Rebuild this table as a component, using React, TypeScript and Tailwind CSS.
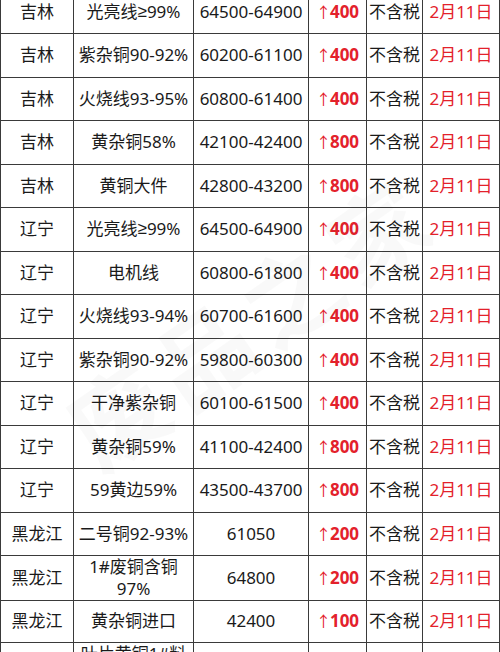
import React from "react";

type Row = {
  region: string;
  item: React.ReactNode;
  price: string;
  change: string;
};

const Ge = () => <span className="font-['Liberation_Sans']">≥</span>;

const ROWS: Row[] = [
  { region: "吉林", item: <>光亮线<Ge />99%</>, price: "64500-64900", change: "400" },
  { region: "吉林", item: "紫杂铜90-92%", price: "60200-61100", change: "400" },
  { region: "吉林", item: "火烧线93-95%", price: "60800-61400", change: "400" },
  { region: "吉林", item: "黄杂铜58%", price: "42100-42400", change: "800" },
  { region: "吉林", item: "黄铜大件", price: "42800-43200", change: "800" },
  { region: "辽宁", item: <>光亮线<Ge />99%</>, price: "64500-64900", change: "400" },
  { region: "辽宁", item: "电机线", price: "60800-61800", change: "400" },
  { region: "辽宁", item: "火烧线93-94%", price: "60700-61600", change: "400" },
  { region: "辽宁", item: "紫杂铜90-92%", price: "59800-60300", change: "400" },
  { region: "辽宁", item: "干净紫杂铜", price: "60100-61500", change: "400" },
  { region: "辽宁", item: "黄杂铜59%", price: "41100-42400", change: "800" },
  { region: "辽宁", item: "59黄边59%", price: "43500-43700", change: "800" },
  { region: "黑龙江", item: "二号铜92-93%", price: "61050", change: "200" },
  { region: "黑龙江", item: <>1#废铜含铜<br />97%</>, price: "64800", change: "200" },
  { region: "黑龙江", item: "黄杂铜进口", price: "42400", change: "100" },
  { region: "黑龙江", item: <>叶片黄铜1#料<br />进口</>, price: "42000", change: "100" },
];

const cell =
  "flex items-center justify-center text-center border-r border-b border-[#3a3a3a] leading-[22px]";

function TableRow({ row }: { row: Row }) {
  return (
    <div className="grid grid-cols-[74px_120px_115px_58px_56px_77px] h-[43.5px]">
      <div className={`${cell} border-l text-[#1a1a1a]`}>{row.region}</div>
      <div className={`${cell} text-[#1a1a1a] whitespace-nowrap`}>{row.item}</div>
      <div className={`${cell} text-[#1a1a1a]`}>{row.price}</div>
      <div className={`${cell} text-[#e3212b]`}>
        <span className="font-normal text-[15px] -mr-[1px]">↑</span>
        <span className="font-bold">{row.change}</span>
      </div>
      <div className={`${cell} text-[#1a1a1a]`}>不含税</div>
      <div className={`${cell} text-[#e3212b]`}>2月11日</div>
    </div>
  );
}

export default function App() {
  return (
    <div
      className="relative w-[500px] h-[652px] overflow-hidden bg-white text-[17px]"
      style={{ fontFamily: '"Noto Sans", "Noto Sans CJK SC", sans-serif' }}
    >
      <div className="-mt-[9.5px]">
        {ROWS.map((row, i) => (
          <TableRow key={i} row={row} />
        ))}
      </div>
      {/* watermark */}
      <div className="pointer-events-none absolute left-[40px] top-[250px] -rotate-[35deg] text-[96px] font-bold tracking-[10px] text-[#000]/[0.025] whitespace-nowrap">
        废品之家
      </div>
    </div>
  );
}
